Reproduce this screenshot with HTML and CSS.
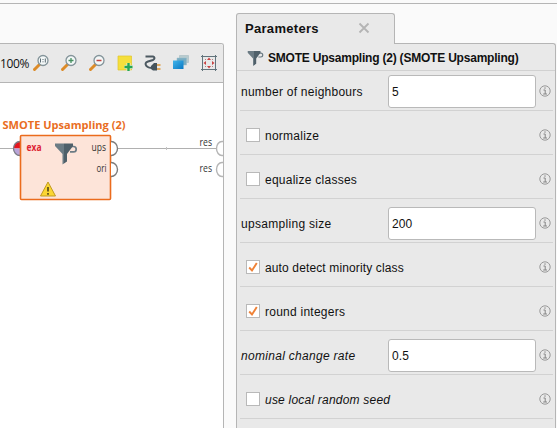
FILE: index.html
```html
<!DOCTYPE html>
<html lang="en">
<head>
<meta charset="utf-8">
<title>Process and Parameters</title>
<link rel="stylesheet" href="styles.css">
</head>
<body>
<svg width="0" height="0" class="defs">
  <defs>
    <linearGradient id="steel" x1="0" x2="1"><stop offset=".5" stop-color="#6b7b84"/><stop offset=".5" stop-color="#4f606a"/></linearGradient>
    <linearGradient id="blue" x1="0" y1="0" x2="1" y2="1"><stop offset="0" stop-color="#43b5ea"/><stop offset="1" stop-color="#0878c4"/></linearGradient>
    <symbol id="info" viewBox="0 0 12 12"><circle cx="6" cy="6" r="5.200" fill="none" stroke="#999"/><path d="M6 2.300v1.500M4.500 5H6.200V9M4.200 9h3.800" fill="none" stroke="#858585" stroke-width="1"/></symbol>
    <symbol id="funnel" viewBox="0 0 24 24"><path d="M17 4.500h2.500a2.700 2.700 0 0 1 0 5.400H16" fill="none" stroke="#6b7b84" stroke-width="1.700"/><path d="M1 1.500h18v2.500l-6 8v7.500L8.500 22.500V12L1 4z" fill="url(#steel)"/></symbol>
    <symbol id="lens" viewBox="0 0 18 18"><path d="M2.500 15.500L7.500 10.500" stroke="#dc8b28" stroke-width="3" stroke-linecap="round"/><circle cx="11" cy="6.500" r="5" fill="#f4f8f8" stroke="#84949a" stroke-width="1.300"/></symbol>
  </defs>
</svg>
<main class="workspace">
  <section class="process">
    <div class="toolbar">
      <span class="zoom">100%</span>
      <div class="tools">
        <svg viewBox="0 0 18 18"><use href="#lens"/><path d="M8.500 4.500v4M13.300 4.500v4M11 5v1M11 7.300v1" stroke="#596a72" stroke-width="1"/></svg>
        <svg viewBox="0 0 18 18"><use href="#lens"/><path d="M8.500 6.500h5M11 4v5" stroke="#46905f" stroke-width="1.300"/></svg>
        <svg viewBox="0 0 18 18"><use href="#lens"/><path d="M8.500 6.500h5" stroke="#c2433f" stroke-width="1.400"/></svg>
        <svg viewBox="0 0 18 18"><path d="M2 2h13.500v14H2z" fill="#f5df3c" stroke="#e1c62d" stroke-width=".7"/><path d="M12.500 9v8M8.500 13h8" stroke="#e9edcc" stroke-width="4"/><path d="M12.500 9v8M8.500 13h8" stroke="#25a655" stroke-width="2.400"/></svg>
        <svg viewBox="0 0 18 18"><path d="M1.500 2.500H9q3 1 0 3.500L4 7.500Q0 9 2.500 12q1.500 2 6 2" fill="none" stroke="#4c5961" stroke-width="2"/><path d="M7 12l3-3h3v7.500H9L7 15z" fill="#46545c"/><path d="M13 11h3.500M13 15h3.500" stroke="#dc9434" stroke-width="1.500"/></svg>
        <svg viewBox="0 0 18 18"><path d="M7.500 1.500h9v7h-9z" fill="#b8cbcf" stroke="#9eb6bd" stroke-width=".5"/><path d="M5 4h9.500v7H5z" fill="#78acc2" stroke="#9bbdca" stroke-width=".5"/><path d="M1 6.500h10.500v8.500H1z" fill="url(#blue)"/></svg>
        <svg viewBox="0 0 18 18"><path d="M2.500 1v16M15.500 1v16M1 2.500h16M1 15.500h16" stroke="#62747c"/><path d="M9 3.500l-2 2.500h4zM9 14.500l-2-2.500h4zM3.500 9L6 7v4zM14.500 9L12 7v4z" fill="#c94343"/><path d="M5 5l1 1M13 5l-1 1M5 13l1-1M13 13l-1-1" stroke="#ae8585"/></svg>
      </div>
    </div>
    <svg class="canvas" viewBox="0 83 223 345">
      <path d="M0 148.500H14M117 148.500H217" stroke="#b0b0b0"/>
      <path d="M166.500 147v3" stroke="#c4c4c4"/>
      <text x="2.500" y="129" class="node-title" textLength="123" lengthAdjust="spacingAndGlyphs">SMOTE Upsampling (2)</text>
      <path d="M20 141.500a6.500 7 0 0 0-6.500 7H20z" fill="#e51520"/>
      <path d="M20 155.500a6.500 7 0 0 1-6.500-7H20z" fill="#b9a4d9"/>
      <path d="M20 141.500a6.500 7 0 0 0 0 14" fill="none" stroke="#7c7c86" stroke-width="1.300"/>
      <rect x="20.500" y="135.500" width="90" height="64" rx="1" fill="#fde4d9" stroke="#eb6b1d" stroke-width="1.600"/>
      <path d="M111 141.500a6.500 7 0 0 1 0 14M111 162.500a6.500 7 0 0 1 0 14" fill="#fff" stroke="#7c7c7c" stroke-width="1.400"/>
      <path d="M223 141.500h-1a5.500 7 0 0 0 0 14h1M223 162.500h-1a5.500 7 0 0 0 0 14h1" fill="#fff" stroke="#b5b5b5" stroke-width="1.400"/>
      <text x="26.500" y="151" class="port input" textLength="15" lengthAdjust="spacingAndGlyphs">exa</text>
      <text x="91.500" y="151" class="port" textLength="14.500" lengthAdjust="spacingAndGlyphs">ups</text>
      <text x="96.500" y="172" class="port" textLength="10" lengthAdjust="spacingAndGlyphs">ori</text>
      <text x="199.500" y="146" class="port" textLength="12.500" lengthAdjust="spacingAndGlyphs">res</text>
      <text x="199.500" y="172" class="port" textLength="12.500" lengthAdjust="spacingAndGlyphs">res</text>
      <use href="#funnel" x="54" y="142" width="24" height="24"/>
      <path d="M48 182l7.500 14h-15z" fill="#fbd633" stroke="#c19b21" stroke-linejoin="round"/><path d="M48 187v4.500M48 193v1.700" stroke="#4e4218" stroke-width="1.600"/>
    </svg>
  </section>
  <section class="parameters">
    <header class="tab"><span>Parameters</span><svg class="close" viewBox="0 0 12 12"><path d="M1.500 1.500l9 9M10.500 1.500l-9 9" stroke="#b4b4b4" stroke-width="1.800"/></svg></header>
    <div class="panel">
      <h2><svg class="funnel"><use href="#funnel"/></svg><span>SMOTE Upsampling (2) (SMOTE Upsampling)</span></h2>
      <div class="row first"><span class="label neighbours">number of neighbours</span><span class="field">5</span><svg class="info"><use href="#info"/></svg></div>
      <div class="row"><span class="check"></span><span class="option">normalize</span><svg class="info"><use href="#info"/></svg></div>
      <div class="row"><span class="check"></span><span class="option">equalize classes</span><svg class="info"><use href="#info"/></svg></div>
      <div class="row"><span class="label">upsampling size</span><span class="field">200</span><svg class="info"><use href="#info"/></svg></div>
      <div class="row"><span class="check"><svg viewBox="0 0 12 12"><path d="M2.200 6.500l2.800 3L9.800 2" fill="none" stroke="#ef8237" stroke-width="1.900"/></svg></span><span class="option detect">auto detect minority class</span><svg class="info"><use href="#info"/></svg></div>
      <div class="row"><span class="check"><svg viewBox="0 0 12 12"><path d="M2.200 6.500l2.800 3L9.800 2" fill="none" stroke="#ef8237" stroke-width="1.900"/></svg></span><span class="option">round integers</span><svg class="info"><use href="#info"/></svg></div>
      <div class="row"><span class="label expert">nominal change rate</span><span class="field">0.5</span><svg class="info"><use href="#info"/></svg></div>
      <div class="row"><span class="check"></span><span class="option expert">use local random seed</span><svg class="info"><use href="#info"/></svg></div>
    </div>
  </section>
</main>
</body>
</html>
```
FILE: styles.css
```css
* { box-sizing: border-box; }
body { margin: 0; padding-top: 3px; height: 428px; overflow: hidden; background: #fafafa; color: #111; font: 12px "Liberation Sans", Arial, sans-serif; }
svg { display: block; flex: none; }
.defs { position: absolute; }
.workspace { display: flex; gap: 12px; height: 425px; border-top: 1px solid #b5b5b5; }
.process { width: 224px; height: 385px; margin-top: 39px; border: solid #b5b5b5; border-width: 1px 1px 0 0; border-top-right-radius: 3px; background: #fff; overflow: hidden; flex: none; }
.toolbar { display: flex; height: 39px; background: #e9e9e9; border-bottom: 1px solid #b5b5b5; }
.zoom { width: 30px; margin-top: 12px; font: 12px/15px "Open Sans", sans-serif; letter-spacing: -.4px; flex: none; }
.tools { display: flex; gap: 10px; margin: 10px 0 0 2px; }
.tools svg { width: 18px; height: 18px; }
.canvas { width: 223px; height: 345px; }
.node-title { font: bold 11px "Open Sans", sans-serif; fill: #e96d23; }
.port { font: 10px "Open Sans", sans-serif; fill: #333; }
.input { font-weight: bold; fill: #dd2332; }
.parameters { width: 320px; height: 416px; margin-top: 9px; flex: none; }
.tab { position: relative; display: flex; align-items: center; width: 159px; height: 31px; padding: 0 24px 2px 8px; border: 1px solid #b5b5b5; border-bottom: 0; border-radius: 3px 3px 0 0; background: #e9e9e9; font-size: 13px; font-weight: bold; letter-spacing: .3px; }
.close { width: 12px; height: 12px; margin-left: auto; }
.panel { margin-top: -1px; height: 386px; border: solid #b5b5b5; border-width: 1px 1px 0; border-top-right-radius: 3px; background: #e9e9e9; }
h2 { display: flex; align-items: center; height: 27px; margin: 0; padding: 2px 0 0 10px; border-bottom: 1px solid #d1d1d1; font-size: 12px; font-weight: bold; letter-spacing: -.21px; white-space: nowrap; }
.funnel { width: 17px; height: 17px; margin-right: 4px; }
.row { display: flex; align-items: center; height: 44px; margin: 0 2px 0 3px; padding-top: 5px; border-bottom: 1px solid #d2d2d2; white-space: nowrap; }
.first { height: 40px; padding-top: 1px; }
.label { width: 147px; padding: 1px 0 0 1px; letter-spacing: .3px; }
.neighbours { letter-spacing: .25px; }
.field { display: flex; align-items: center; width: 148px; height: 33px; padding: 1px 0 0 3px; margin-left: 1px; border: 1px solid #b9b9b9; border-radius: 3px; background: #fff; letter-spacing: .1px; }
.info { width: 12px; height: 12px; margin-left: auto; margin-right: 2px; }
.check { width: 14px; height: 14px; margin-left: 6px; border: 1px solid #b9b9b9; background: #fff; flex: none; }
.check svg { width: 12px; height: 12px; }
.option { margin-left: 5px; padding-top: 1px; letter-spacing: .25px; }
.detect { letter-spacing: .13px; }
.expert { font-style: italic; }
.option.expert { letter-spacing: .21px; }
```
